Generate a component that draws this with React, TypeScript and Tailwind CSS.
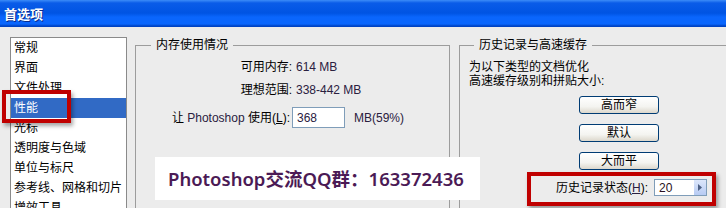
const LIST = ['常规', '界面', '文件处理', '性能', '光标', '透明度与色域', '单位与标尺', '参考线、网格和切片', '增效工具']

function XpButton({ label }: { label: string }) {
  return (
    <div className="w-[80px] h-[18px] rounded-[3px] border border-[#003c74] bg-[linear-gradient(to_bottom,#ffffff,#f4f4f0_60%,#dcd7cc)] flex items-center justify-center leading-[14px]">
      {label}
    </div>
  )
}

export default function App() {
  return (
    <div className="w-[726px] h-[208px] overflow-hidden bg-[#ececec] text-[12px] leading-[14px] text-black font-['Liberation_Sans','Noto_Sans_CJK_SC',sans-serif]">
      {/* 标题栏 */}
      <div className="h-[27px] pl-[4px] flex items-center bg-[linear-gradient(to_bottom,#3c8cf8_0px,#0a5ce8_3px,#0054e3_13px,#0a66fd_17px,#0a66fd_24px,#0043c4_26px)]">
        <span className="text-white font-bold text-[13px] leading-[16px] [text-shadow:1px_1px_0_#0a2c8c] font-['Noto_Sans_CJK_SC',sans-serif]">
          首选项
        </span>
      </div>

      <div className="relative flex items-start h-[181px]">
        {/* 左侧列表 */}
        <div className="ml-[10px] mt-[10px] w-[117px] h-[200px] shrink-0 border border-[#8a8a8a] bg-white">
          {LIST.map((item, i) => (
            <div
              key={item}
              className={`h-[20px] pl-[3px] flex items-center ${i === 3 ? 'bg-[#316ac5] text-white' : ''}`}
            >
              {item}
            </div>
          ))}
        </div>

        {/* 内存使用情况 */}
        <fieldset className="ml-[8px] mt-[11px] w-[315px] h-[200px] shrink-0 border border-[#9c9c9c] p-0 m-0 min-w-0">
          <legend className="ml-[15px] px-[5px] leading-[14px]">内存使用情况</legend>
          <div className="pt-[5px]">
            <div className="flex h-[20px] items-center">
              <span className="w-[156px] text-right">可用内存:</span>
              <span className="pl-[4px] text-[#2a2040]">614 MB</span>
            </div>
            <div className="flex h-[20px] items-center mt-[3px]">
              <span className="w-[156px] text-right">理想范围:</span>
              <span className="pl-[4px] text-[#2a2040]">338-442 MB</span>
            </div>
            <div className="flex h-[21px] items-center mt-[7px]">
              <span className="w-[154px] text-right">
                让 <span className="text-[#2a2040]">Photoshop</span> 使用(<span className="underline">L</span>):
              </span>
              <div className="ml-[2px] w-[53px] h-[21px] border border-[#7f9db9] bg-white pl-[4px] flex items-center text-[#2a2040]">
                368
              </div>
              <span className="ml-[9px] text-[#2a2040]">MB(59%)</span>
            </div>
          </div>
        </fieldset>

        {/* 历史记录与高速缓存 */}
        <fieldset className="ml-[9px] mt-[11px] w-[300px] h-[200px] shrink-0 border border-[#9c9c9c] p-0 m-0 min-w-0">
          <legend className="ml-[14px] px-[5px] leading-[14px]">历史记录与高速缓存</legend>
          <div className="pl-[9px] pt-[8px]">
            <div>为以下类型的文档优化</div>
            <div>高速缓存级别和拼贴大小:</div>
            <div className="ml-[110px] mt-[8px] flex flex-col gap-[10px]">
              <XpButton label="高而窄" />
              <XpButton label="默认" />
              <XpButton label="大而平" />
            </div>
            <div className="mt-[2px] ml-[58px] w-[189px] h-[34px] border-4 border-[#c00000] shadow-[2px_3px_4px_rgba(0,0,0,0.35)] flex items-start justify-end pt-[3px] pr-[5px]">
              <span className="h-[17px] flex items-center">
                历史记录状态(<span className="underline text-[#2a2040]">H</span>):
              </span>
              <div className="ml-[6px] w-[53px] h-[17px] border border-[#7f9db9] bg-white flex">
                <span className="flex-1 pl-[4px] flex items-center text-[#2a1020]">20</span>
                <div className="w-[12px] h-full bg-[linear-gradient(to_bottom,#dce6fb,#b7cbf3)] flex items-center justify-center">
                  <svg width="4" height="7" viewBox="0 0 4 7">
                    <path d="M0 0 L4 3.5 L0 7 Z" fill="#4d6185" />
                  </svg>
                </div>
              </div>
            </div>
          </div>
        </fieldset>

        {/* 性能 标注框 */}
        <div className="absolute left-[2px] top-[63px] w-[69px] h-[33px] border-4 border-[#c00000] shadow-[2px_3px_4px_rgba(0,0,0,0.35)]" />

        {/* 水印 */}
        <div className="absolute left-[155px] top-[130px] w-[325px] h-[43px] bg-white flex items-center pl-[13px] whitespace-nowrap text-[#4b1a55] font-semibold text-[18.5px] leading-[24px] font-['Noto_Sans','Noto_Sans_CJK_SC',sans-serif]">
          Photoshop交流QQ群：163372436
        </div>
      </div>
    </div>
  )
}
